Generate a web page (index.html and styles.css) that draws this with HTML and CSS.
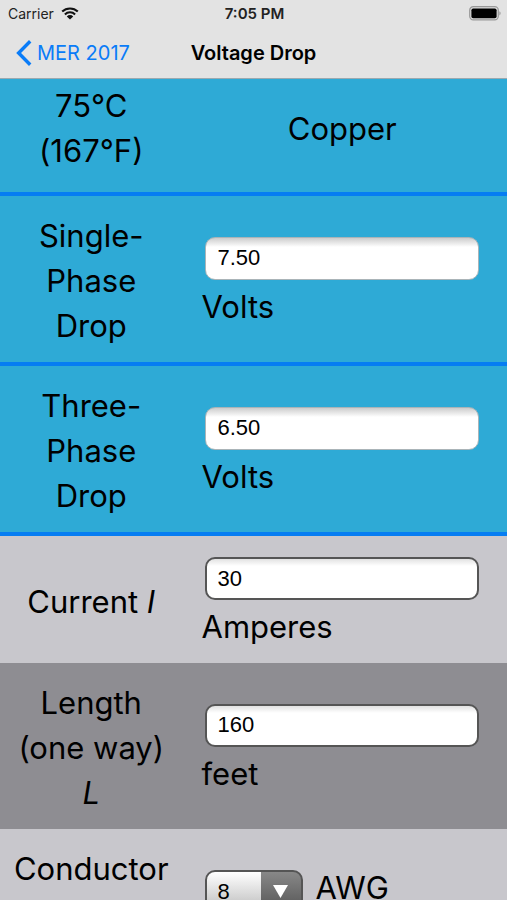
FILE: index.html
```html
<!DOCTYPE html>
<html lang="en">
<head>
<meta charset="utf-8">
<meta name="viewport" content="width=device-width, initial-scale=1">
<title>Voltage Drop</title>
<link rel="stylesheet" href="styles.css">
</head>
<body>
<header class="top">
  <div class="status">
    <div class="carrier">
      <span>Carrier</span>
      <svg class="wifi" viewBox="0 0 18 13" aria-hidden="true">
        <path d="M1.2 4.6a11.2 11.2 0 0 1 15.6 0M3.9 7.4a7.3 7.3 0 0 1 10.2 0" fill="none" stroke="#111" stroke-width="2.1"/>
        <path d="M9 12.6 5.8 9.4a4.6 4.6 0 0 1 6.4 0z" fill="#111"/>
      </svg>
    </div>
    <div class="time">7:05 PM</div>
    <svg class="battery" viewBox="0 0 32 15" aria-hidden="true">
      <rect x=".7" y=".7" width="28.6" height="13.2" rx="3.6" fill="#ddd" stroke="#999" stroke-width="1.2"/>
      <rect x="2.4" y="2.4" width="25.2" height="9.8" rx="1.8" fill="#000"/>
      <path d="M30.4 5.2c1.6.6 1.6 3.6 0 4.2z" fill="#999"/>
    </svg>
  </div>
  <nav class="nav">
    <a class="back" href="#">
      <svg class="chevron" viewBox="0 0 16 26" aria-hidden="true"><path d="M14.2 1.2 2.6 13l11.600 11.800" fill="none" stroke="#0a7cf8" stroke-width="3.4"/></svg>
      <span>MER 2017</span>
    </a>
    <h1 class="title">Voltage Drop</h1>
  </nav>
</header>
<main class="content">
  <table class="form">
    <tbody>
      <tr class="result first">
        <th scope="row">75°C (167°F)</th>
        <td class="material">Copper</td>
      </tr>
      <tr class="result">
        <th scope="row"><label for="single">Single-Phase Drop</label></th>
        <td><input class="field" id="single" type="text" value="7.50" readonly>Volts</td>
      </tr>
      <tr class="result">
        <th scope="row"><label for="three">Three-Phase Drop</label></th>
        <td><input class="field" id="three" type="text" value="6.50" readonly>Volts</td>
      </tr>
      <tr class="light">
        <th scope="row"><label for="current">Current <i>I</i></label></th>
        <td><input class="field" id="current" type="text" value="30">Amperes</td>
      </tr>
      <tr class="dark">
        <th scope="row"><label for="length">Length (one way) <i>L</i></label></th>
        <td><input class="field" id="length" type="text" value="160">feet</td>
      </tr>
      <tr class="light last">
        <th scope="row"><label for="size">Conductor</label></th>
        <td>
          <div class="pick">
            <select class="select" id="size"><option>8</option></select>
            <span class="unit">AWG</span>
          </div>
        </td>
      </tr>
    </tbody>
  </table>
</main>
</body>
</html>
```
FILE: styles.css
```css
* {
  box-sizing: border-box;
}

body {
  margin: 0;
  height: 100vh;
  display: flex;
  flex-direction: column;
  overflow: hidden;
  background: #c8c7cc;
  color: #000;
  font-family: Inter, Roboto, sans-serif;
}

.top {
  flex: none;
  background: #e3e3e3;
  border-bottom: 1px solid #9aa9b0;
}

.status {
  display: grid;
  grid-template-columns: 1fr auto 1fr;
  align-items: center;
  height: 27px;
  padding: 0 6px 0 8px;
  color: #222;
  font-size: 14px;
}

.carrier {
  display: flex;
  align-items: center;
  gap: 7px;
}

.wifi {
  width: 18px;
  height: 13px;
}

.time {
  font-size: 15px;
  font-weight: 600;
}

.battery {
  width: 32px;
  height: 15px;
  justify-self: end;
}

.nav {
  display: grid;
  grid-template-columns: 1fr auto 1fr;
  align-items: center;
  height: 51px;
  padding: 0 16px;
}

.back {
  display: flex;
  align-items: center;
  gap: 5px;
  color: #0a7cf8;
  font-size: 20px;
  text-decoration: none;
}

.chevron {
  width: 16px;
  height: 26px;
}

.title {
  margin: 0;
  font-size: 20px;
  font-weight: 600;
}

.content {
  flex: 1;
  min-height: 0;
  overflow: hidden;
}

.form {
  width: 100%;
  table-layout: fixed;
  border-collapse: separate;
  border-spacing: 0;
  font-size: 31px;
  line-height: 45px;
}

th,
td {
  padding: 17px 20px 14px 19px;
  vertical-align: middle;
}

th {
  width: 36%;
  padding-left: 12px;
  padding-right: 12px;
  font-weight: 400;
  text-align: center;
}

.result th,
.result td {
  background: #2eaad6;
  border-bottom: 4px solid #067df2;
}

.first th,
.first td {
  padding-top: 4px;
  padding-bottom: 19px;
}

.form .material {
  padding-left: 0;
  padding-right: 5px;
  text-align: center;
}

.light {
  background: #c8c7cc;
}

.dark {
  background: #8e8d92;
}

.field {
  display: block;
  width: calc(100% - 11px);
  height: 43px;
  margin: 4px 3px;
  padding: 0 11px;
  border: 2px solid #555;
  border-radius: 10px;
  background: linear-gradient(#e2e2e2, #fff 7px);
  color: #000;
  font: 22px "Liberation Sans", Arial, sans-serif;
}

.result .field {
  border: 1px solid #aab4b8;
  padding: 0 12px;
  background: linear-gradient(#ccc, #fff 9px);
}

.last th,
.last td {
  vertical-align: top;
}

.last td {
  padding-top: 37px;
}

.pick {
  display: flex;
  align-items: flex-start;
  gap: 13px;
}

.unit {
  line-height: 43px;
}

.select {
  appearance: none;
  width: 98px;
  height: 43px;
  margin: 4px 0 4px 3px;
  padding: 0 11px;
  border: 2px solid #555;
  border-radius: 10px;
  background:
    url("data:image/svg+xml,%3Csvg xmlns='http://www.w3.org/2000/svg' viewBox='0 0 40 40'%3E%3Cpath d='M12 13h15l-7.500 13z' fill='white'/%3E%3C/svg%3E") right 0 top 0 / 40px 40px no-repeat,
    linear-gradient(#888, #555) right / 40px 100% no-repeat,
    linear-gradient(#fff, #bbb);
  color: #000;
  font: 22px "Liberation Sans", Arial, sans-serif;
}
```
